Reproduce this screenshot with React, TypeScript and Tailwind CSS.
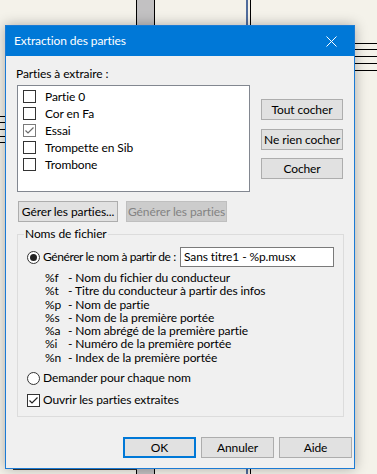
import React from "react";

const CheckBox = ({ checked = false, gray = false }: { checked?: boolean; gray?: boolean }) => (
  <span
    className={
      "relative flex h-[13px] w-[13px] shrink-0 items-center justify-center border bg-white " +
      (gray ? "border-[#7a7a7a]" : "border-[#333333]")
    }
  >
    {checked && (
      <svg width="11" height="11" viewBox="0 0 11 11">
        <path d="M1.5 5.5 L4 8 L9.5 2.5" fill="none" stroke={gray ? "#6a6a6a" : "#222222"} strokeWidth="1.2" />
      </svg>
    )}
  </span>
);

const Radio = ({ checked = false }: { checked?: boolean }) => (
  <span className="flex h-[13px] w-[13px] shrink-0 items-center justify-center rounded-full border border-[#333333] bg-white">
    {checked && <span className="h-[7px] w-[7px] rounded-full bg-[#222222]" />}
  </span>
);

const Btn = ({ children, w, focus = false, disabled = false }: { children: React.ReactNode; w: string; focus?: boolean; disabled?: boolean }) => (
  <div
    className={
      "flex h-[21px] shrink-0 items-center justify-center whitespace-nowrap text-[12px] leading-none " +
      w +
      " " +
      (focus
        ? "border-2 border-[#0078d7] bg-[#e1e1e1] text-black"
        : disabled
        ? "border border-[#bfbfbf] bg-[#cccccc] text-[#838383]"
        : "border border-[#adadad] bg-[#e1e1e1] text-black")
    }
  >
    {children}
  </div>
);

const parts = [
  { name: "Partie 0", checked: false },
  { name: "Cor en Fa", checked: false },
  { name: "Essai", checked: true },
  { name: "Trompette en Sib", checked: false },
  { name: "Trombone", checked: false },
];

const legend = [
  ["%f", "Nom du fichier du conducteur"],
  ["%t", "Titre du conducteur à partir des infos"],
  ["%p", "Nom de partie"],
  ["%s", "Nom de la première portée"],
  ["%a", "Nom abrégé de la première partie"],
  ["%i", "Numéro de la première portée"],
  ["%n", "Index de la première portée"],
];

export default function App() {
  return (
    <div className="relative h-[474px] w-[377px] overflow-hidden whitespace-nowrap bg-[#f4f2ea] font-['Lato','Noto_Sans',sans-serif] text-[12px] tracking-[-0.1px] text-black">
      {/* background score decorations */}
      <div className="absolute left-[136px] top-0 h-full w-[19px] border-x border-black bg-[#c2c1c2]" />
      <div className="absolute left-[246px] top-0 h-full w-[2px] bg-[#4f6c9c]" />
      <div className="absolute left-[250px] top-0 h-full w-px bg-black" />
      {[43, 49, 56, 63, 70].map((y) => (
        <div key={y} className="absolute left-[355px] h-px w-[22px] bg-black" style={{ top: y }} />
      ))}
      {[116, 122, 129, 136, 142].map((y) => (
        <div key={y} className="absolute left-0 h-px w-[5px] bg-black" style={{ top: y }} />
      ))}
      <div className="absolute left-[13px] top-[469px] h-px w-[124px] bg-[#333]" />

      {/* dialog */}
      <div className="relative z-10 ml-[5px] mt-[25px] flex h-[444px] w-[350px] flex-col border border-[#1c7bd4] bg-[#f0f0f0] shadow-[0_0_12px_rgba(0,0,0,0.3)]">
        <div className="flex h-[30px] shrink-0 items-center bg-[#0078d7] pl-[8px] text-white">
          <span className="flex-1 text-[12px]">Extraction des parties</span>
          <div className="flex h-full w-[46px] items-center justify-center">
            <svg width="11" height="11" viewBox="0 0 11 11">
              <path d="M0.5 0.5 L10.5 10.5 M10.5 0.5 L0.5 10.5" stroke="white" strokeWidth="1" />
            </svg>
          </div>
        </div>

        <div className="flex flex-1 flex-col pl-[11px] pr-[2px] pt-[10px]">
          <div className="-ml-px h-[16px] leading-[16px]">Parties à extraire :</div>

          <div className="mt-[3px] flex">
            <div className="flex h-[107px] w-[233px] flex-col border border-[#828790] bg-white pl-[5px] pt-[2px]">
              {parts.map((p) => (
                <div key={p.name} className="flex h-[17px] items-center gap-[9px]">
                  <CheckBox checked={p.checked} gray={p.checked} />
                  <span>{p.name}</span>
                </div>
              ))}
            </div>
            <div className="ml-[11px] flex flex-col pt-[14px]">
              <Btn w="w-[82px]">Tout cocher</Btn>
              <div className="mt-[9px]">
                <Btn w="w-[82px]">Ne rien cocher</Btn>
              </div>
              <div className="mt-[8px]">
                <Btn w="w-[82px]">Cocher</Btn>
              </div>
            </div>
          </div>

          <div className="ml-px mt-[9px] flex gap-[8px]">
            <Btn w="w-[100px]">Gérer les parties...</Btn>
            <Btn w="w-[101px]" disabled>
              Générer les parties
            </Btn>
          </div>

          <div className="relative mt-[12px] flex h-[183px] w-[327px] flex-col border border-[#dcdcdc] pl-[9px] pr-[9px] pt-[12px]">
            <span className="absolute left-[6px] top-[-9px] bg-[#f0f0f0] px-[1px] leading-[16px]">Noms de fichier</span>
            <div className="flex h-[20px] items-center">
              <Radio checked />
              <span className="ml-[3px] tracking-[-0.4px]">Générer le nom à partir de :</span>
              <div className="ml-auto flex h-[20px] w-[154px] shrink-0 items-center border border-[#7a7a7a] bg-white pl-[3px]">
                Sans titre1 - %p.musx
              </div>
            </div>
            <div className="ml-[18px] mt-[4px] flex flex-col leading-[13.3px]">
              {legend.map(([c, t]) => (
                <div key={c} className="flex h-[13.3px] items-center">
                  <span className="w-[23px]">{c}</span>
                  <span>- {t}</span>
                </div>
              ))}
            </div>
            <div className="mt-[6px] flex h-[16px] items-center">
              <Radio />
              <span className="ml-[3px]">Demander pour chaque nom</span>
            </div>
            <div className="mt-[6px] flex h-[16px] items-center">
              <CheckBox checked />
              <span className="ml-[3px]">Ouvrir les parties extraites</span>
            </div>
          </div>

          <div className="mt-[20px] flex justify-end gap-[5px]">
            <Btn w="w-[73px]" focus>
              OK
            </Btn>
            <Btn w="w-[73px]">Annuler</Btn>
            <Btn w="w-[73px]">Aide</Btn>
          </div>
        </div>
      </div>
    </div>
  );
}
